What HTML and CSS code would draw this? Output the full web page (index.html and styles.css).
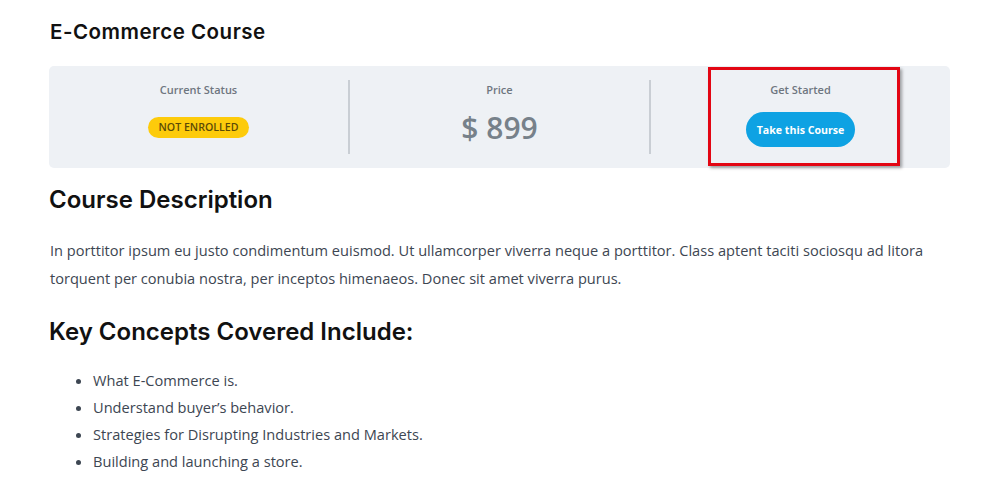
FILE: index.html
```html
<!DOCTYPE html>
<html lang="en">
<head>
<meta charset="utf-8">
<title>E-Commerce Course</title>
<link rel="stylesheet" href="styles.css">
</head>
<body>
<main class="page">
  <h1 class="title">E-Commerce Course</h1>
  <section class="stats">
    <div class="cell">
      <div class="label">Current Status</div>
      <span class="badge">NOT ENROLLED</span>
    </div>
    <div class="divider"></div>
    <div class="cell">
      <div class="label">Price</div>
      <div class="price">$ 899</div>
    </div>
    <div class="divider"></div>
    <div class="cell cell-cta">
      <div class="highlight">
        <div class="label">Get Started</div>
        <button class="btn">Take this Course</button>
      </div>
    </div>
  </section>
  <h2 class="heading heading-desc">Course Description</h2>
  <p class="text">In porttitor ipsum eu justo condimentum euismod. Ut ullamcorper viverra neque a porttitor. Class aptent taciti sociosqu ad litora torquent per conubia nostra, per inceptos himenaeos. Donec sit amet viverra purus.</p>
  <h2 class="heading heading-key">Key Concepts Covered Include:</h2>
  <ul class="list">
    <li>What E-Commerce is.</li>
    <li>Understand buyer’s behavior.</li>
    <li>Strategies for Disrupting Industries and Markets.</li>
    <li>Building and launching a store.</li>
  </ul>
</main>
</body>
</html>
```
FILE: styles.css
```css
* { box-sizing: border-box; }
html, body { margin: 0; padding: 0; background: #fff; }
body { font-family: "Open Sans", "Liberation Sans", sans-serif; color: #3d4652; }

.page { width: 901px; margin-left: 49px; padding-top: 18px; }

.title, .heading {
  font-family: Inter, "Liberation Sans", sans-serif;
  font-weight: 600;
  color: #111;
  margin: 0;
}
.title { font-size: 20.5px; line-height: 28px; padding-left: 1px; letter-spacing: 0.5px; }

.stats {
  margin-top: 20px;
  height: 102px;
  background: #eef1f5;
  border-radius: 5px;
  display: flex;
  align-items: flex-start;
}
.cell {
  flex: 1;
  display: flex;
  flex-direction: column;
  align-items: center;
  padding-top: 16px;
}
.divider { width: 2px; height: 74px; align-self: center; background: #c9ced4; }
.label { font-size: 11px; line-height: 16px; font-weight: 600; color: #6e7680; }
.badge {
  margin-top: 19px;
  background: #fdcb0b;
  color: #5b4a06;
  font-size: 10.6px;
  font-weight: 600;
  line-height: 21px;
  padding: 0 11px;
  border-radius: 11px;
}
.price { margin-top: 10px; font-size: 30px; line-height: 40px; font-weight: 600; color: #77818a; }

.cell-cta { padding-top: 1px; }
.highlight {
  width: 192px;
  height: 99px;
  margin-left: 7px;
  border: 3px solid #e30613;
  box-shadow: 2px 2px 3px rgba(0,0,0,0.35);
  display: flex;
  flex-direction: column;
  align-items: center;
  padding: 12px 7px 0 0;
}
.btn {
  margin-top: 14px;
  height: 35px;
  padding: 0 11px;
  border: 0;
  border-radius: 18px;
  background: #0ea2e3;
  color: #fff;
  font-family: "Open Sans", sans-serif;
  font-weight: 700;
  font-size: 10.6px;
}

.heading { font-size: 24px; line-height: 32px; }
.heading-desc { margin-top: 16px; }
.text { margin: 20px 0 0; font-size: 14.6px; line-height: 28px; padding-left: 1px; }
.heading-key { margin-top: 24px; }
.list { margin: 19px 0 0; padding-left: 44px; font-size: 14.6px; line-height: 27px; }
```
